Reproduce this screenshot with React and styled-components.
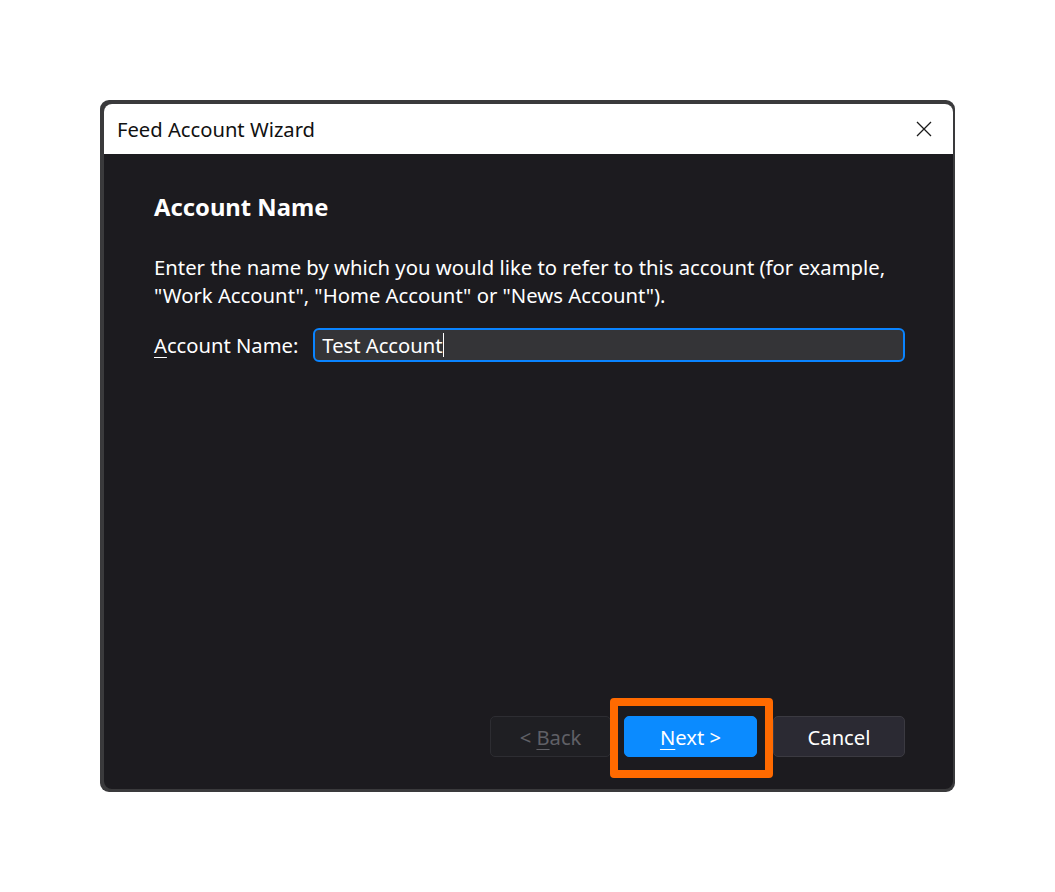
import React from 'react'
import styled, { createGlobalStyle } from 'styled-components'

const GlobalStyle = createGlobalStyle`
  html, body {
    margin: 0;
    padding: 0;
    background: #ffffff;
  }
  body {
    font-family: "Noto Sans", "Open Sans", sans-serif;
  }
`

const Page = styled.div`
  width: 1055px;
  height: 892px;
  padding: 100px 0 0 100px;
  box-sizing: border-box;
`

const Frame = styled.div`
  width: 855px;
  height: 692px;
  box-sizing: border-box;
  padding: 4px 2px 3px 4px;
  background: #3a3a3c;
  border-radius: 9px;
  display: flex;
`

const Window = styled.div`
  flex: 1;
  display: flex;
  flex-direction: column;
  background: #1c1b1f;
  border-radius: 8px;
  overflow: hidden;
`

const TitleBar = styled.div`
  height: 50px;
  flex: none;
  background: #ffffff;
  display: flex;
  align-items: center;
  justify-content: space-between;
  padding: 0 17px 0 13px;
  color: #111111;
  font-size: 20.2px;
`

const CloseButton = styled.button`
  border: none;
  background: none;
  padding: 0;
  width: 24px;
  height: 24px;
  display: grid;
  place-items: center;
  cursor: pointer;
`

const Body = styled.div`
  flex: 1;
  display: flex;
  flex-direction: column;
  padding: 37px 48px 32px 50px;
  color: #ffffff;
`

const Heading = styled.h1`
  margin: 0;
  font-size: 23.8px;
  line-height: 32px;
  font-weight: 700;
`

const Intro = styled.p`
  margin: 30px 0 0;
  font-size: 20.3px;
  line-height: 28px;
`

const FieldRow = styled.label`
  margin-top: 19px;
  display: flex;
  align-items: center;
  gap: 15px;
  font-size: 20.2px;
`

const Key = styled.u`
  text-decoration-thickness: 1px;
  text-underline-offset: 4px;
`

const InputBox = styled.div`
  flex: 1;
  height: 34px;
  box-sizing: border-box;
  background: #343437;
  border: 2px solid #0a84ff;
  border-radius: 6px;
  display: flex;
  align-items: center;
  padding: 0 7px;
`

const TextInput = styled.input`
  width: ${(p) => p.$chars}ch;
  background: transparent;
  border: none;
  padding: 0;
  color: #ffffff;
  font: inherit;
  font-size: 20.2px;
  outline: none;
`

const Caret = styled.span`
  width: 1px;
  height: 24px;
  background: #ffffff;
`

const Footer = styled.div`
  margin-top: auto;
  display: flex;
  justify-content: flex-end;
`

const Button = styled.button`
  position: relative;
  width: ${(p) => p.$width}px;
  margin-left: ${(p) => p.$space || 0}px;
  height: 41px;
  box-sizing: border-box;
  border-radius: 5px;
  font: inherit;
  font-size: 20.2px;
  border: 1px solid ${(p) => (p.$primary ? '#0b8bff' : p.$disabled ? '#2d2d32' : '#3b3a41')};
  background: ${(p) => (p.$primary ? '#0b8bff' : p.$disabled ? '#1f1f23' : '#2b2a33')};
  color: ${(p) => (p.$disabled ? '#606066' : '#ffffff')};
`

const Highlight = styled.span`
  position: absolute;
  left: -15px;
  top: -19px;
  width: 163px;
  height: 80px;
  box-sizing: border-box;
  border: 8px solid #ff6a00;
  border-radius: 4px;
  pointer-events: none;
`

const CloseIcon = () => (
  <svg width="18" height="18" viewBox="0 0 18 18">
    <path d="M2 2 L16 16 M16 2 L2 16" stroke="#1a1a1a" strokeWidth="1.3" fill="none" />
  </svg>
)

const App = () => (
  <Page>
    <GlobalStyle />
    <Frame>
      <Window>
        <TitleBar>
          <span>Feed Account Wizard</span>
          <CloseButton aria-label="Close">
            <CloseIcon />
          </CloseButton>
        </TitleBar>
        <Body>
          <Heading>Account Name</Heading>
          <Intro>
            Enter the name by which you would like to refer to this account (for example,
            <br />
            "Work Account", "Home Account" or "News Account").
          </Intro>
          <FieldRow>
            <span>
              <Key>A</Key>ccount Name:
            </span>
            <InputBox>
              <TextInput defaultValue="Test Account" $chars={10.45} />
              <Caret />
            </InputBox>
          </FieldRow>
          <Footer>
            <Button $width={121} $disabled>
              &lt; <Key>B</Key>ack
            </Button>
            <Button $width={133} $space={13} $primary>
              <Key>N</Key>ext &gt;
              <Highlight />
            </Button>
            <Button $width={132} $space={16}>Cancel</Button>
          </Footer>
        </Body>
      </Window>
    </Frame>
  </Page>
)

export default App
